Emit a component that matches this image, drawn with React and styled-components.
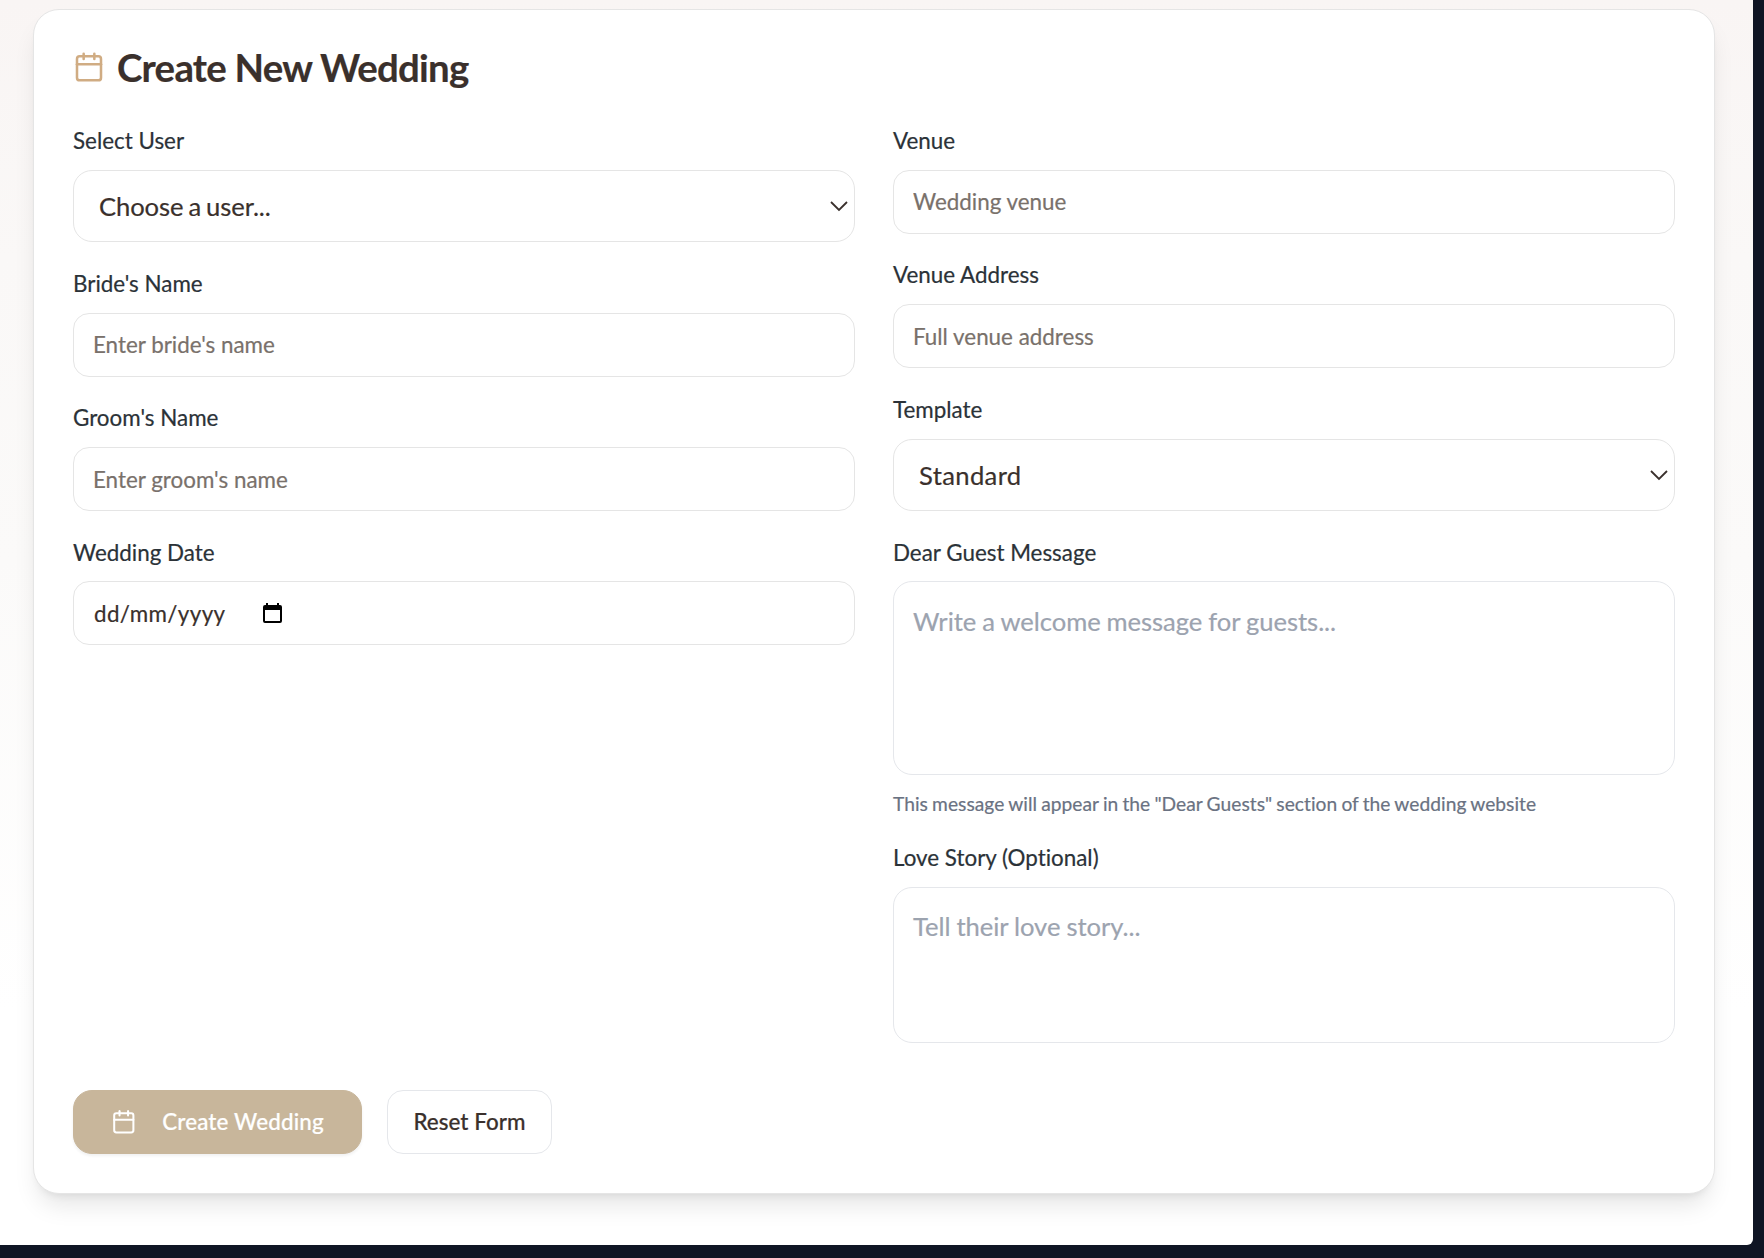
import React from "react";
import styled, { createGlobalStyle, css } from "styled-components";
import { Calendar } from "lucide-react";

const Global = createGlobalStyle`
  * { box-sizing: border-box; }
  body { margin: 0; background: #0f1524; overflow: hidden; }
  body, input, textarea, select, button {
    font-family: Lato, "Liberation Sans", sans-serif;
    font-variant-ligatures: none;
    -webkit-font-smoothing: antialiased;
    -webkit-text-stroke-width: 0.2px;
  }
`;

const Window = styled.div`
  height: 1258px;
  padding: 0 11px 13px 0;
  background: #0f1524;
`;

const Page = styled.main`
  height: 1245px;
  padding: 9px 38px 0 33px;
  border-radius: 0 0 6px 0;
  background: linear-gradient(180deg, #f9f5f4 0, #faf8f7 260px, #fbfaf9 560px, #ffffff 1010px);
  overflow: hidden;
`;

const Card = styled.form`
  height: 1185px;
  padding: 0 39px;
  border: 1px solid #e5e5e5;
  border-radius: 26px;
  background: #fff;
  box-shadow: 0 16px 24px -5px rgba(0, 0, 0, 0.1), 0 6px 10px -6px rgba(0, 0, 0, 0.1);
`;

const Header = styled.header`
  display: flex;
  align-items: center;
  gap: 12px;
  height: 115px;
  padding-bottom: 2px;
  color: #3a302c;
`;

const Title = styled.h1`
  margin: 0;
  font-size: 38.4px;
  line-height: 48px;
  font-weight: 700;
  letter-spacing: -0.74px;
`;

const Columns = styled.div`
  display: grid;
  grid-template-columns: 1fr 1fr;
  gap: 38px;
  height: 918px;
`;

const Column = styled.div`
  display: flex;
  flex-direction: column;
`;

const Field = styled.div`
  display: flex;
  flex-direction: column;
  margin-bottom: ${(p) => p.$after}px;
`;

const Label = styled.label`
  height: 45px;
  padding-top: ${(p) => p.$drop || 0}px;
  font-size: 22.4px;
  line-height: 32px;
  color: #2b3238;
`;

const box = css`
  display: block;
  width: 100%;
  margin: 0;
  border: 1px solid #e5e5e5;
  outline: none;
  background: #fff;
  color: #3a302c;
`;

const Input = styled.input`
  ${box}
  height: 64px;
  padding: 0 19px ${(p) => p.$lift || 0}px;
  border-radius: 16px;
  font-size: 22.4px;
  &::placeholder { color: #79716b; opacity: 1; }
`;

const DateBox = styled.div`
  ${box}
  display: flex;
  align-items: center;
  gap: 37px;
  height: 64px;
  padding: 0 20px;
  border-radius: 16px;
  font-size: 22.4px;
  letter-spacing: 0.38px;
`;

const SelectWrap = styled.div`
  position: relative;
`;

const Select = styled.select`
  ${box}
  appearance: none;
  height: 72px;
  padding: 0 25px;
  border-radius: 19px;
  font-size: 25.6px;
  letter-spacing: ${(p) => p.$tracking}px;
  word-spacing: -1.4px;
`;

const Chevron = styled.svg`
  position: absolute;
  right: 7px;
  top: 31px;
  pointer-events: none;
`;

const TextArea = styled.textarea`
  ${box}
  height: ${(p) => p.$height}px;
  padding: ${(p) => p.$top}px 19px 0;
  border-radius: 19px;
  border-color: #e5e7eb;
  font-size: 25.6px;
  line-height: 41px;
  letter-spacing: -0.05px;
  word-spacing: -0.5px;
  resize: none;
  &::placeholder { color: #9ca3af; opacity: 1; }
`;

const Hint = styled.p`
  margin: 13px 0 1px;
  height: 32px;
  font-size: 19.2px;
  line-height: 32px;
  letter-spacing: 0.04px;
  word-spacing: -0.8px;
  color: #6a7282;
`;

const Actions = styled.div`
  display: flex;
  gap: 25px;
  padding-top: 47px;
`;

const Button = styled.button`
  display: flex;
  align-items: center;
  justify-content: ${(p) => (p.$primary ? "flex-start" : "center")};
  gap: 25.6px;
  height: 64px;
  width: ${(p) => (p.$primary ? 289 : 165)}px;
  padding: 0 0 1px ${(p) => (p.$primary ? 37 : 0)}px;
  border: 1px solid ${(p) => (p.$primary ? "#c8b69b" : "#e5e7eb")};
  border-radius: ${(p) => (p.$primary ? 19 : 16)}px;
  background: ${(p) => (p.$primary ? "#c8b69b" : "#fff")};
  box-shadow: ${(p) => (p.$primary ? "0 2px 3px rgba(0,0,0,.06)" : "none")};
  color: ${(p) => (p.$primary ? "#fff" : "#3a302c")};
  font-size: 22.4px;
  font-weight: 500;
  letter-spacing: ${(p) => (p.$primary ? 0.15 : 0.05)}px;
`;

const ButtonText = styled.span`
  line-height: 32px;
`;

const PickerIcon = () => (
  <svg width="19" height="21" viewBox="0 0 19 21">
    <path fill="#000" fillRule="evenodd" d="M3 0h2v2h9V0h2v2h1a2 2 0 0 1 2 2v14a2 2 0 0 1-2 2H2a2 2 0 0 1-2-2V4a2 2 0 0 1 2-2h1zM2 7v11h15V7z" />
  </svg>
);

const Dropdown = ({ id, value, tracking }) => (
  <SelectWrap>
    <Select id={id} defaultValue={value} $tracking={tracking}>
      <option>{value}</option>
    </Select>
    <Chevron width="18" height="11" viewBox="0 0 18 11" fill="none" stroke="#3a302c" strokeWidth="1.8">
      <path d="M1 1l8 8 8-8" />
    </Chevron>
  </SelectWrap>
);

export default function App() {
  return (
    <Window>
      <Global />
      <Page>
        <Card>
          <Header>
            <Calendar size={32} color="#d0ac83" strokeWidth={1.9} />
            <Title>Create New Wedding</Title>
          </Header>
          <Columns>
            <Column>
              <Field $after={26}>
                <Label htmlFor="user">Select User</Label>
                <Dropdown id="user" value="Choose a user..." tracking={-0.1} />
              </Field>
              <Field $after={25}>
                <Label htmlFor="bride">Bride's Name</Label>
                <Input id="bride" $lift={2} placeholder="Enter bride's name" />
              </Field>
              <Field $after={25}>
                <Label htmlFor="groom">Groom's Name</Label>
                <Input id="groom" placeholder="Enter groom's name" />
              </Field>
              <Field $after={0}>
                <Label $drop={1}>Wedding Date</Label>
                <DateBox>
                  <span>dd/mm/yyyy</span>
                  <PickerIcon />
                </DateBox>
              </Field>
            </Column>
            <Column>
              <Field $after={25}>
                <Label htmlFor="venue">Venue</Label>
                <Input id="venue" $lift={2} placeholder="Wedding venue" />
              </Field>
              <Field $after={26}>
                <Label htmlFor="address">Venue Address</Label>
                <Input id="address" placeholder="Full venue address" />
              </Field>
              <Field $after={25}>
                <Label htmlFor="template">Template</Label>
                <Dropdown id="template" value="Standard" tracking={0.35} />
              </Field>
              <Field $after={21}>
                <Label htmlFor="message" $drop={1}>Dear Guest Message</Label>
                <TextArea id="message" $height={194} $top={19} placeholder="Write a welcome message for guests..." />
                <Hint>This message will appear in the "Dear Guests" section of the wedding website</Hint>
              </Field>
              <Field $after={0}>
                <Label htmlFor="story">Love Story (Optional)</Label>
                <TextArea id="story" $height={156} $top={18} placeholder="Tell their love story..." />
              </Field>
            </Column>
          </Columns>
          <Actions>
            <Button type="button" $primary>
              <Calendar size={25.6} strokeWidth={1.9} />
              <ButtonText>Create Wedding</ButtonText>
            </Button>
            <Button type="button">
              <ButtonText>Reset Form</ButtonText>
            </Button>
          </Actions>
        </Card>
      </Page>
    </Window>
  );
}
